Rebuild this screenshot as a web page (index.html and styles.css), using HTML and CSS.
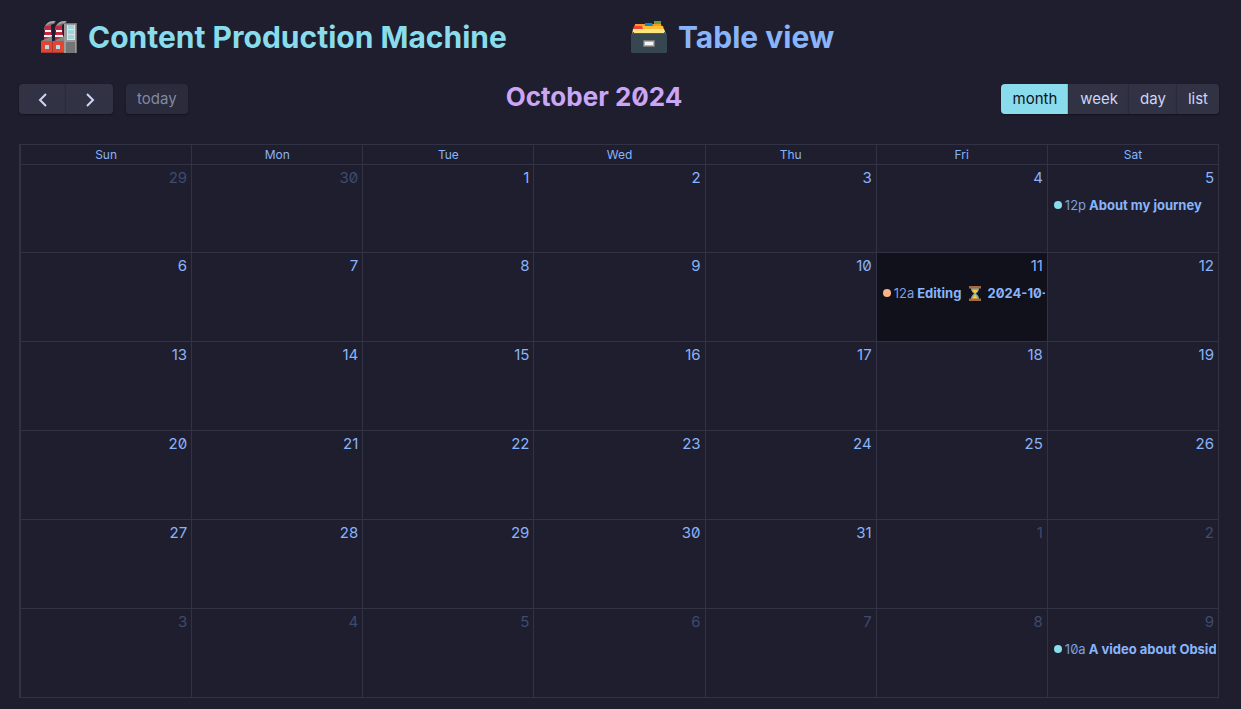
FILE: index.html
```html
<!DOCTYPE html>
<html lang="en">
<head>
<meta charset="utf-8">
<meta name="viewport" content="width=device-width, initial-scale=1">
<title>Content Production Machine</title>
<link rel="stylesheet" href="styles.css">
</head>
<body>
<header class="titles">
  <h1 class="title title-main">
    <svg class="emoji" viewBox="0 0 36 34" aria-hidden="true">
      <path fill="#757575" d="M3 10c0-6 4-9 12-9l-2 3c-3 0-4 2-4 5zM14 10c0-6 4-9 12-9l-2 3c-3 0-4 2-4 5z"/>
      <path fill="#a5a5a5" d="M5 6c1-4 4-5 9-5l-1 2c-4 0-6 1-8 3zM16 6c1-4 4-5 9-5l-1 2c-4 0-6 1-8 3z"/>
      <path fill="#c62842" d="M4 6h6l1 14H3zM15 6h6l1 14h-8z"/>
      <path fill="#f5f5f5" d="M4 10h6v2H4zM3 15h8v2H3zM15 10h6v2h-6zM14 15h8v2h-8z"/>
      <path fill="#858585" d="M0 21l11-5v6l12-6v6H0z"/>
      <path fill="#df4634" d="M0 21h23v12H0z"/>
      <path fill="#aa3930" d="M11 21h1v12h-1zM0 32h23v1H0z"/>
      <path fill="#b7dce5" d="M4 25h4v4H4zM15 25h4v4h-4z"/>
      <path fill="#9b9b9b" d="M23 3h13v30H23z"/>
      <path fill="#757575" d="M23 3h13v1H23zM35 4h1v29h-1zM25 22h9v11h-9z"/>
      <path fill="#e2e2e2" d="M26 5h8v15h-8z"/>
      <path fill="#9fd5df" d="M27 5h6v4h-6zM27 10h6v4h-6zM27 15h6v4h-6z"/>
    </svg>
    <span>Content Production Machine</span>
  </h1>
  <h1 class="title">
    <svg class="emoji" viewBox="0 0 36 34" aria-hidden="true">
      <path fill="#689f38" d="M23 1h7v6h-7z"/>
      <path fill="#f39c28" d="M4 4h26l2 7H3z"/>
      <path fill="#0288d1" d="M14 3h7l1 3h-8z"/>
      <path fill="#ffbd2e" d="M4 6h28l2 7H2z"/>
      <path fill="#f44336" d="M3 6h8l1 3H2z"/>
      <path fill="#ffe082" d="M2 9h31l2 5H1z"/>
      <path fill="#455a64" d="M2 12h32l2 3H0z"/>
      <path fill="#ffe57f" d="M3 10h30v3H3z"/>
      <path fill="#37474f" d="M0 14h36v18l-1 1H1l-1-1z"/>
      <rect x="12" y="20" width="12" height="7" rx="1" fill="#757575"/>
      <path fill="#b0b0b0" d="M13 21h10v5H13z"/>
      <path fill="#f5f5f5" d="M14 22h8v3h-8z"/>
    </svg>
    <a class="title-link" href="#table">Table view</a>
  </h1>
</header>
<main class="calendar">
  <div class="toolbar">
    <div class="toolbar-left">
      <div class="group">
        <button class="btn btn-icon" type="button" aria-label="Previous month"><svg class="chevron" viewBox="0 0 10 16" aria-hidden="true"><path d="M8 2L2 8l6 6"/></svg></button>
        <button class="btn btn-icon" type="button" aria-label="Next month"><svg class="chevron" viewBox="0 0 10 16" aria-hidden="true"><path d="M2 2l6 6-6 6"/></svg></button>
      </div>
      <div class="group"><button class="btn" type="button" disabled>today</button></div>
    </div>
    <h2 class="month">October 2024</h2>
    <div class="group">
      <button class="btn btn-active" type="button" aria-pressed="true">month</button>
      <button class="btn" type="button">week</button>
      <button class="btn" type="button">day</button>
      <button class="btn" type="button">list</button>
    </div>
  </div>
  <div class="frame">
    <table class="days">
      <thead><tr><th>Sun</th><th>Mon</th><th>Tue</th><th>Wed</th><th>Thu</th><th>Fri</th><th>Sat</th></tr></thead>
      <tbody>
        <tr class="first-week"><td class="other">29</td><td class="other">30</td><td>1</td><td>2</td><td>3</td><td>4</td><td>5
          <a class="event" href="#journey"><span class="dot"></span><span class="time">12p</span><b class="name">About my journey</b></a></td></tr>
        <tr><td>6</td><td>7</td><td>8</td><td>9</td><td>10</td><td class="today">11
          <a class="event" href="#editing"><span class="dot dot-peach"></span><span class="time">12a</span><b class="name">Editing <svg class="hourglass" viewBox="0 0 12 15" aria-hidden="true"><path fill="#7fa9b5" d="M2 2h8c0 3-1 4-3 5.500 2 1.500 3 3 3 5.500H2c0-2.500 1-4 3-5.500C3 6 2 5 2 2z"/><path fill="#ffca28" d="M3 4h6L6 7.500zM6 8l3 5H3z"/><path fill="#a56a43" d="M0 0h12v2.500H0zM0 12.500h12V15H0z"/></svg> 2024-10-11</b></a></td><td>12</td></tr>
        <tr><td>13</td><td>14</td><td>15</td><td>16</td><td>17</td><td>18</td><td>19</td></tr>
        <tr><td>20</td><td>21</td><td>22</td><td>23</td><td>24</td><td>25</td><td>26</td></tr>
        <tr><td>27</td><td>28</td><td>29</td><td>30</td><td>31</td><td class="other">1</td><td class="other">2</td></tr>
        <tr><td class="other">3</td><td class="other">4</td><td class="other">5</td><td class="other">6</td><td class="other">7</td><td class="other">8</td><td class="other">9
          <a class="event" href="#video"><span class="dot"></span><span class="time">10a</span><b class="name">A video about Obsidian</b></a></td></tr>
      </tbody>
    </table>
  </div>
</main>
</body>
</html>
```
FILE: styles.css
```css
* { box-sizing: border-box; }

body {
  margin: 0;
  background: #1e1e2e;
  color: #89b4fa;
  font-family: Inter, "Noto Sans", sans-serif;
  font-size: 15px;
  font-variant-numeric: slashed-zero;
}

.titles {
  display: grid;
  grid-template-columns: 1fr 1fr;
  padding: 17px 20px 26px 41px;
}

.title {
  display: flex;
  align-items: center;
  gap: 11px;
  margin: 0;
  font-size: 30px;
  line-height: 40px;
  font-weight: 700;
  white-space: nowrap;
}

.title-main { color: #89dceb; }
.title-link { color: inherit; text-decoration: none; }
.emoji { width: 36px; height: 34px; flex: none; }

.calendar { padding: 0 22px 11px 19px; }

.toolbar {
  display: flex;
  justify-content: space-between;
  align-items: flex-end;
  margin-bottom: 30px;
}

.toolbar-left { display: flex; gap: 13px; }

.group {
  display: flex;
  border-radius: 4px;
  overflow: hidden;
  box-shadow: 0 1px 2px #14141f;
}

.btn {
  height: 30px;
  padding: 0 11px 2px;
  border: 0;
  background: #313244;
  color: #cdd6f4;
  font: inherit;
  font-size: 15px;
}

.btn + .btn { box-shadow: -1px 0 1px #2a2a3a; }
.btn:disabled { background: #2a2b3c; color: #8388a1; }
.btn-active { padding: 0 12px 2px; background: #89dceb; color: #11111b; }

.btn-icon {
  display: flex;
  align-items: center;
  justify-content: center;
  width: 47px;
  padding: 2px 0 0;
}

.chevron {
  width: 10px;
  height: 16px;
  fill: none;
  stroke: currentColor;
  stroke-width: 2;
}

.month {
  margin: 0;
  padding-bottom: 3px;
  color: #cba6f7;
  font-size: 26px;
  line-height: 28px;
  font-weight: 700;
}

.frame { border-left: 1px solid #313244; }

.days {
  width: 100%;
  table-layout: fixed;
  border-collapse: collapse;
}

.days th,
.days td {
  border: 1px solid #313244;
}

.days th {
  height: 20px;
  padding: 0 0 1px;
  font-size: 12px;
  line-height: 17px;
  font-weight: 400;
}

.days td {
  height: 89px;
  padding: 3px 4px 0 2px;
  text-align: right;
  vertical-align: top;
  line-height: 20px;
  color: #89b4fa;
}

.days .first-week td { height: 88px; }
.days .other { color: #3e4b6f; }
.days .today { background: #11111b; }

.event {
  display: flex;
  align-items: center;
  gap: 3px;
  margin: 7px -2px 0 2px;
  padding-left: 2px;
  overflow: hidden;
  color: #89b4fa;
  font-size: 13px;
  line-height: 20px;
  text-decoration: none;
  white-space: nowrap;
}

.dot {
  flex: none;
  width: 8px;
  height: 8px;
  border-radius: 50%;
  background: #89dceb;
}

.dot-peach { background: #fab387; }
.time { color: #7c9fdd; }
.name { font-weight: 700; }
.hourglass { width: 12px; height: 15px; margin: 0 4px; vertical-align: -3px; }
```
